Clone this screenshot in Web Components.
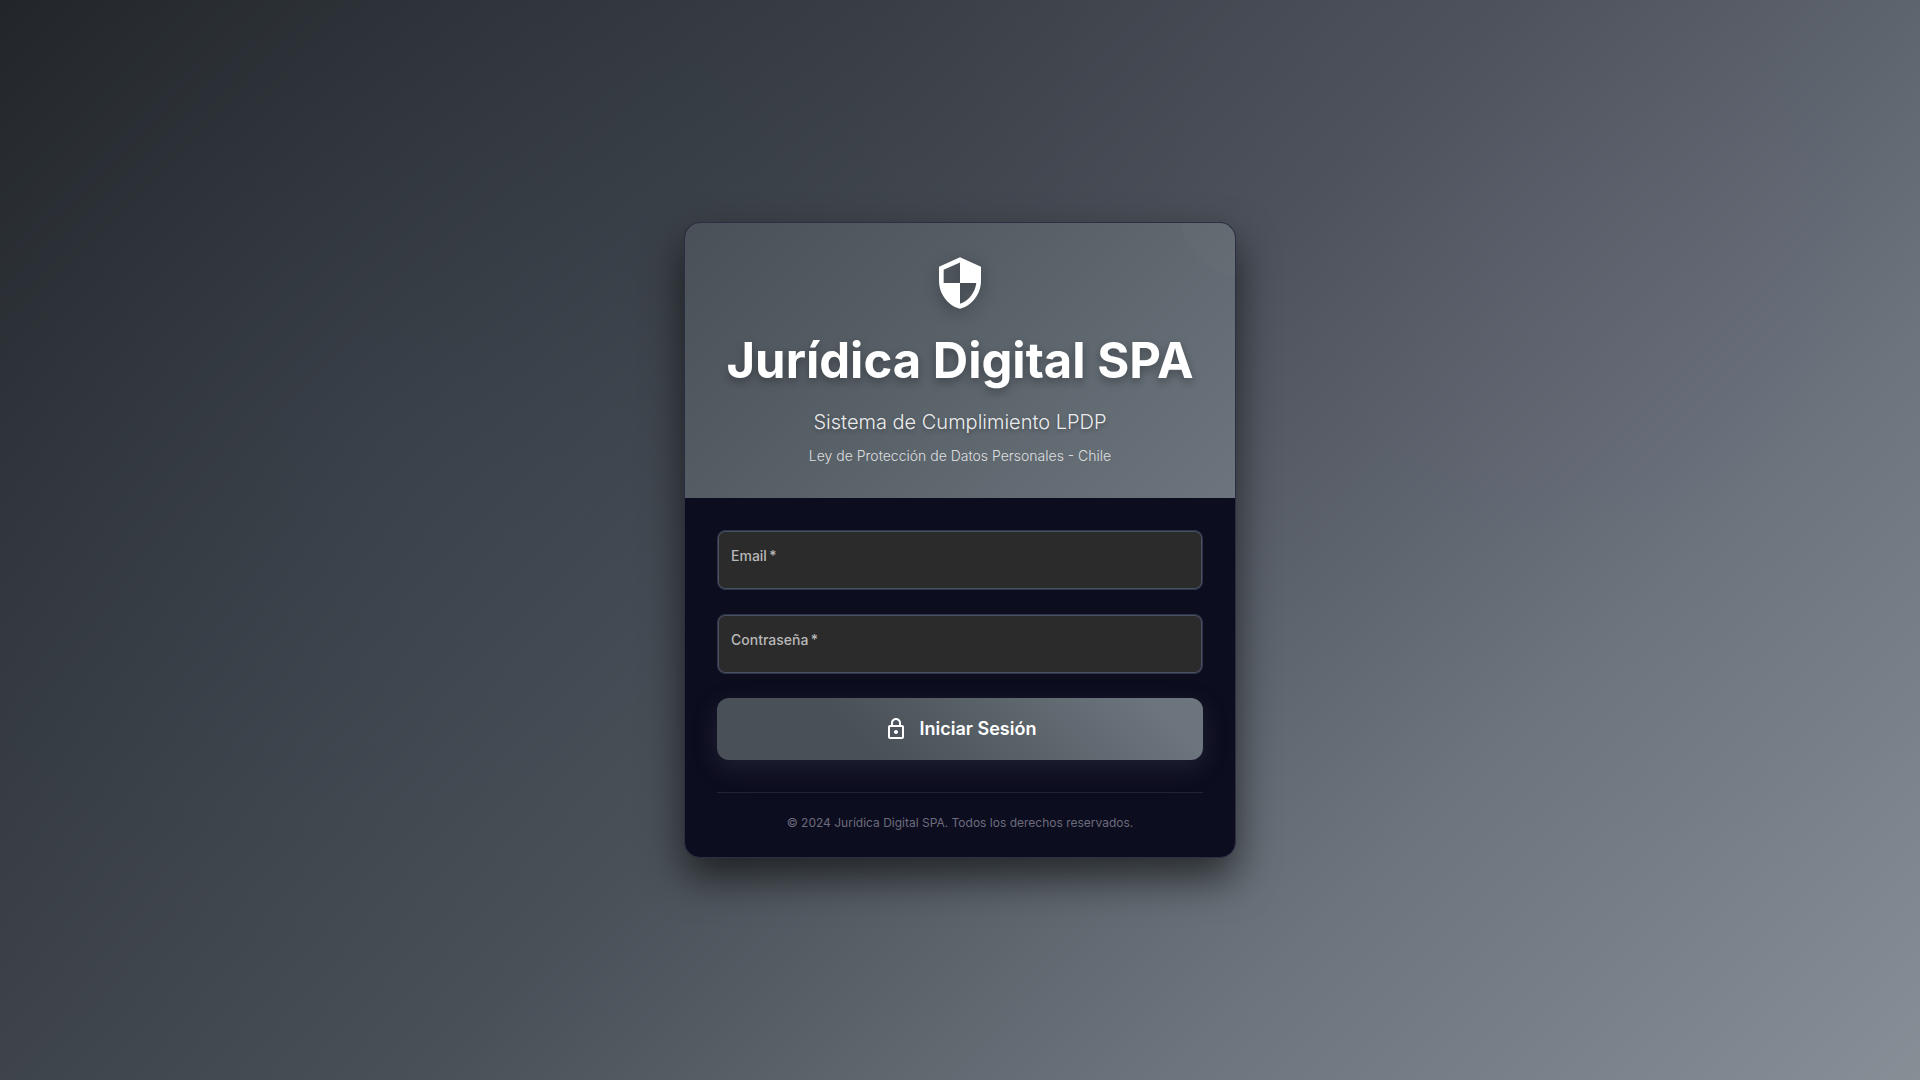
<!DOCTYPE html>
<html lang="es">
<head>
<meta charset="utf-8">
<meta name="viewport" content="width=device-width, initial-scale=1">
<title>Jurídica Digital SPA</title>
<style>
  html, body { margin: 0; min-height: 100%; }
  body { font-family: Inter, Roboto, "Liberation Sans", sans-serif; color: #fff; }
</style>
</head>
<body>
<login-page>
  <login-card>
    <brand-header slot="header">
      <span slot="title">Jurídica Digital SPA</span>
      <span slot="subtitle">Sistema de Cumplimiento LPDP</span>
      <span slot="note">Ley de Protección de Datos Personales - Chile</span>
    </brand-header>
    <text-field label="Email" type="email" autocomplete="email"></text-field>
    <text-field label="Contraseña" type="password" autocomplete="current-password"></text-field>
    <submit-button>Iniciar Sesión</submit-button>
    <span slot="footer">© 2024 Jurídica Digital SPA. Todos los derechos reservados.</span>
  </login-card>
</login-page>
<script>
  class BaseElement extends HTMLElement {
    constructor() {
      super();
      this.attachShadow({ mode: 'open' }).innerHTML =
        '<style>*{box-sizing:border-box}' + this.constructor.styles + '</style>' + this.constructor.markup;
    }
  }

  customElements.define('login-page', class extends BaseElement {
    static styles = `
      :host {
        display: flex; align-items: center; justify-content: center;
        box-sizing: border-box; min-height: 100vh; padding: 24px;
        background:
          radial-gradient(circle at 80% 20%, rgba(112, 96, 132, .14) 0%, transparent 40%),
          radial-gradient(circle at 20% 40%, rgba(90, 104, 134, .1) 0%, transparent 40%),
          linear-gradient(135deg, #212529 0%, #343a40 25%, #495057 50%, #6c757d 75%, #868e96 100%);
      }
      main { width: 100%; max-width: 552px; }`;
    static markup = '<main><slot></slot></main>';
  });

  customElements.define('login-card', class extends BaseElement {
    static styles = `
      :host {
        display: block; overflow: hidden; background: #0d0d20;
        border: 1px solid #2d2d44; border-radius: 16px;
        box-shadow: 0 20px 40px rgba(0, 0, 0, .6);
      }
      .body { padding: 32px 32px 24px; }
      form { display: flex; flex-direction: column; gap: 24px; }
      footer {
        margin-top: 32px; padding-top: 20px; border-top: 1px solid #232336;
        font-size: 12px; line-height: 20px; text-align: center; color: #6c6c7c;
      }`;
    static markup = `
      <slot name="header"></slot>
      <div class="body">
        <form><slot></slot></form>
        <footer><slot name="footer"></slot></footer>
      </div>`;
  });

  customElements.define('brand-header', class extends BaseElement {
    static styles = `
      :host {
        display: block; position: relative; overflow: hidden; padding: 32px; text-align: center;
        background: linear-gradient(135deg, #495057 0%, #6c757d 100%);
      }
      :host::before {
        content: ""; position: absolute; top: -75px; right: -75px; width: 130px; height: 130px;
        border-radius: 50%; background: rgba(255, 255, 255, .02);
      }
      svg {
        display: block; width: 56px; height: 56px; margin: 0 auto 21px; fill: #fff;
        filter: drop-shadow(0 4px 8px rgba(0, 0, 0, .3));
      }
      h1 {
        margin: 0 0 16px; font-size: 49px; line-height: 58px; font-weight: 700;
        text-shadow: 0 4px 8px rgba(0, 0, 0, .3);
      }
      h2 {
        margin: 0 0 8px; font-size: 20px; line-height: 32px; font-weight: 300;
        color: rgba(255, 255, 255, .9); text-shadow: 0 2px 4px rgba(0, 0, 0, .3);
      }
      p { margin: 0; font-size: 14px; line-height: 20px; font-weight: 300; color: rgba(255, 255, 255, .8); }`;
    static markup = `
      <svg viewBox="0 0 24 24" aria-hidden="true"><path d="M12 1 3 5v6c0 5.55 3.84 10.74 9 12 5.16-1.26 9-6.45 9-12V5l-9-4zm0 10.99h7c-.53 4.12-3.28 7.79-7 8.94V12H5V6.3l7-3.11v8.8z"/></svg>
      <h1><slot name="title"></slot></h1>
      <h2><slot name="subtitle"></slot></h2>
      <p><slot name="note"></slot></p>`;
  });

  customElements.define('text-field', class extends BaseElement {
    static styles = `
      :host { display: grid; }
      label, input { grid-area: 1 / 1; }
      label {
        z-index: 1; align-self: start; justify-self: start; padding: 16px 14px; pointer-events: none;
        font-size: 14px; line-height: 20px; font-weight: 500; color: #b8b8b8;
      }
      input {
        width: 100%; height: 60px; margin: 0; padding: 24px 14px 8px; outline: none;
        font: inherit; font-size: 16px; color: #fff; background: #2b2b2b;
        border: 1px solid #30344a; border-radius: 8px; box-shadow: inset 0 0 0 1px #495262;
      }
      input:focus { border-color: #868e96; }`;
    static markup = '<label for="control"></label><input id="control" required>';
    connectedCallback() {
      const input = this.shadowRoot.querySelector('input');
      this.shadowRoot.querySelector('label').textContent = this.getAttribute('label') + '\u2009*';
      input.type = this.getAttribute('type');
      input.autocomplete = this.getAttribute('autocomplete');
    }
  });

  customElements.define('submit-button', class extends BaseElement {
    static styles = `
      :host { display: block; }
      button {
        display: flex; align-items: center; justify-content: center; gap: 12px;
        width: 100%; height: 62px; margin: 0; padding: 0 24px; border: 0; border-radius: 12px;
        font: inherit; font-size: 18px; line-height: 30px; font-weight: 600; color: #fff; cursor: pointer;
        background: linear-gradient(45deg, #495057 30%, #6c757d 90%);
        box-shadow: 0 8px 24px rgba(73, 80, 87, .3);
      }
      svg { width: 24px; height: 24px; fill: currentColor; }`;
    static markup = `
      <button type="submit">
        <svg viewBox="0 0 24 24" aria-hidden="true"><path d="M12 17c1.1 0 2-.9 2-2s-.9-2-2-2-2 .9-2 2 .9 2 2 2zm6-9h-1V6c0-2.76-2.24-5-5-5S7 3.24 7 6v2H6c-1.1 0-2 .9-2 2v10c0 1.1.9 2 2 2h12c1.1 0 2-.9 2-2V10c0-1.1-.9-2-2-2zM8.900 6c0-1.710 1.390-3.100 3.100-3.100s3.100 1.390 3.100 3.100v2H8.900V6zM18 20H6V10h12v10z"/></svg>
        <span><slot></slot></span>
      </button>`;
  });
</script>
</body>
</html>
